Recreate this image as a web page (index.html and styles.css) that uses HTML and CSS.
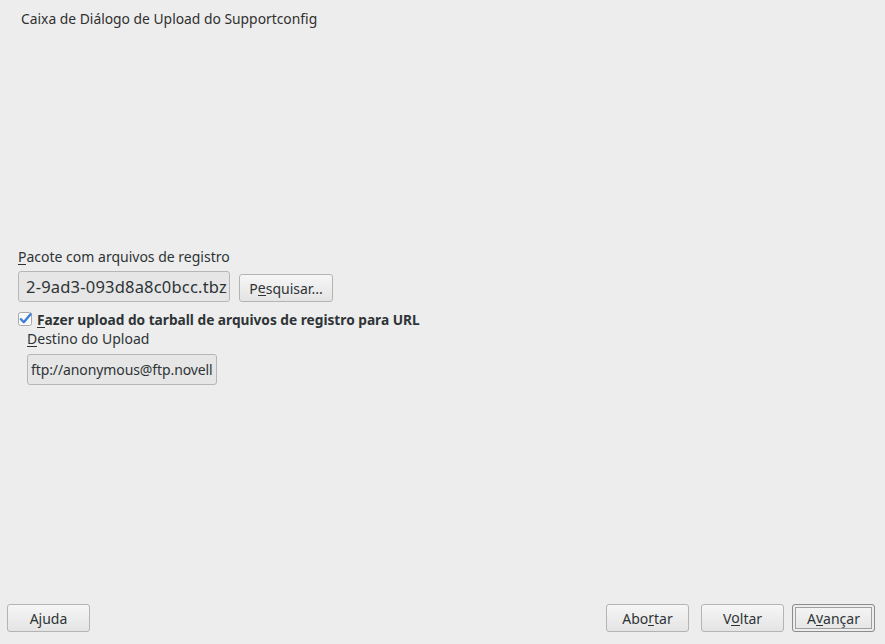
FILE: index.html
```html
<!DOCTYPE html>
<html>
<head>
<meta charset="utf-8">
<link rel="stylesheet" href="styles.css">
</head>
<body>
<div class="window">
  <div class="title">Caixa de Diálogo de Upload do Supportconfig</div>
  <div class="content">
    <div class="label"><u>P</u>acote com arquivos de registro</div>
    <div class="row">
      <div class="field wide"><span>2-9ad3-093d8a8c0bcc.tbz</span></div>
      <button class="btn browse">P<u>e</u>squisar...</button>
    </div>
    <div class="check-row">
      <span class="checkbox">
        <svg width="14" height="14" viewBox="0 0 14 14">
          <rect x="0.5" y="0.5" width="13" height="13" rx="2" fill="#fafafa" stroke="#a9a9a9"/>
          <path d="M3 7.2 L5.8 10.2 L12.5 2.2" fill="none" stroke="#3f7fd6" stroke-width="2.4" stroke-linecap="round" stroke-linejoin="round"/>
        </svg>
      </span>
      <span class="check-label"><u>F</u>azer upload do tarball de arquivos de registro para URL</span>
    </div>
    <div class="sub">
      <div class="label"><u>D</u>estino do Upload</div>
      <div class="field narrow"><span>ftp://anonymous@ftp.novell</span></div>
    </div>
  </div>
  <div class="footer">
    <button class="btn">Ajuda</button>
    <div class="spacer"></div>
    <button class="btn">Abo<u>r</u>tar</button>
    <button class="btn">V<u>o</u>ltar</button>
    <button class="btn default">A<u>v</u>ançar</button>
  </div>
</div>
</body>
</html>
```
FILE: styles.css
```css
html, body {
  margin: 0;
  padding: 0;
  background: #ededed;
}
body {
  font-family: "Noto Sans", "Open Sans", sans-serif;
  font-size: 14px;
  color: #2e3436;
}
.window {
  width: 885px;
  height: 644px;
  display: flex;
  flex-direction: column;
}
.title {
  padding: 9px 0 0 21px;
  height: 24px;
  line-height: 20px;
  font-size: 13.85px;
  color: #303030;
}
.content {
  flex: 1;
  padding: 214px 0 0 18px;
  display: flex;
  flex-direction: column;
}
u {
  text-decoration: none;
  border-bottom: 1px solid currentColor;
  display: inline-block;
  line-height: 14px;
}
.label {
  line-height: 20px;
  height: 20px;
}
.row {
  display: flex;
  align-items: center;
  gap: 9px;
  margin-top: 4px;
}
.field {
  box-sizing: border-box;
  height: 31px;
  border: 1px solid #b6b6b6;
  border-radius: 3px;
  background: #e6e6e6;
  display: flex;
  justify-content: flex-end;
  align-items: center;
  overflow: hidden;
  white-space: nowrap;
  padding-right: 2px;
}
.field.wide {
  width: 212px;
  font-size: 16.5px;
  letter-spacing: 0.2px;
}
.field.narrow {
  width: 190px;
  justify-content: flex-start;
  padding-left: 3px;
  font-size: 14px;
  letter-spacing: -0.1px;
}
.btn {
  font-family: inherit;
  font-size: 14px;
  color: #2e3436;
  height: 28px;
  box-sizing: border-box;
  border: 1px solid #b4b4b4;
  border-radius: 3px;
  background: linear-gradient(#f6f6f6, #e4e4e4);
  padding: 0;
  display: flex;
  align-items: center;
  justify-content: center;
}
.btn.browse {
  width: 94px;
  margin-top: 3px;
}
.check-row {
  display: flex;
  align-items: center;
  margin-top: 7px;
  height: 20px;
}
.checkbox {
  width: 14px;
  height: 14px;
  display: flex;
  margin-right: 5px;
}
.check-label {
  font-weight: bold;
  font-size: 13.7px;
}
.sub {
  padding-left: 9px;
  display: flex;
  flex-direction: column;
}
.sub .field {
  margin-top: 5px;
}
.footer {
  display: flex;
  align-items: center;
  padding: 0 10px 12px 7px;
  gap: 12px;
}
.footer .btn {
  width: 83px;
}
.spacer {
  flex: 1;
}
.footer .btn.default {
  margin-left: -4px;
  box-shadow: inset 0 0 0 2px #ededed, inset 0 0 0 3px #a0a0a0;
  border-color: #8c8c8c;
}
```
